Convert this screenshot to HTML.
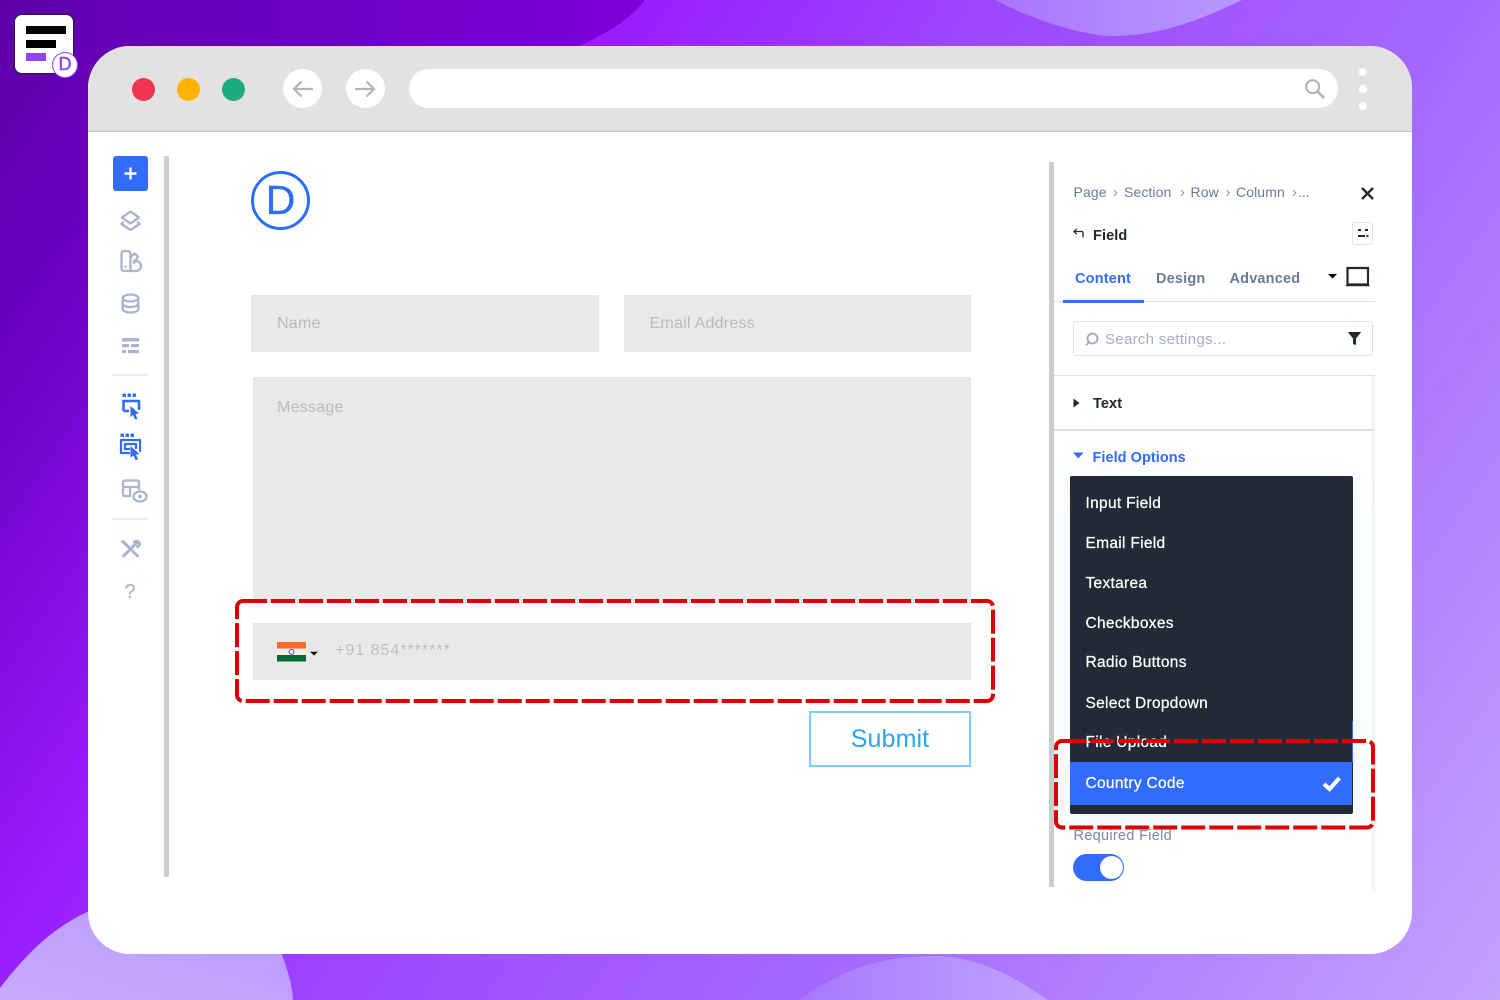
<!DOCTYPE html>
<html><head><meta charset="utf-8">
<style>
*{box-sizing:border-box;margin:0;padding:0}
html,body{width:1500px;height:1000px;overflow:hidden}
body{font-family:"Liberation Sans",sans-serif;position:relative;background:#fff}
.a{position:absolute;white-space:nowrap}
.f{background:#e9e9e9;position:absolute;color:#bbb;font-size:16px;letter-spacing:.25px}
.m{position:absolute;left:1085.5px;color:#fff;font-size:15.5px;-webkit-text-stroke:.25px #fff;white-space:nowrap;letter-spacing:.3px}
.bc{color:#6b7a99;font-size:14px;top:184px;letter-spacing:.1px}
.sep{color:#8a95ad;font-size:15px;top:183.5px}
.tab{top:270.5px;font-size:14.5px;font-weight:700;color:#6b7a99;letter-spacing:.18px}
</style></head><body>
<svg class="a" style="left:0;top:0" width="1500" height="1000">
<defs>
<linearGradient id="g2" x1="0" y1="0" x2="1500" y2="1000" gradientUnits="userSpaceOnUse">
<stop offset="0" stop-color="#5c00a6"/><stop offset=".12" stop-color="#6e00c4"/><stop offset=".29" stop-color="#9a1cff"/><stop offset=".45" stop-color="#9d45ff"/><stop offset=".7" stop-color="#a66bff"/><stop offset="1" stop-color="#c3a2fd"/></linearGradient>
<linearGradient id="b0" x1="0" y1="0" x2="1" y2="0"><stop offset="0" stop-color="#6400b5"/><stop offset="1" stop-color="#7c00d8"/></linearGradient>
<linearGradient id="b1" x1="0" y1="1" x2="1" y2="0"><stop offset="0" stop-color="#c6abff"/><stop offset="1" stop-color="#b99bfd"/></linearGradient>
<linearGradient id="b2" x1="0" y1="0" x2="1" y2="0"><stop offset="0" stop-color="#a678ff"/><stop offset="1" stop-color="#bfa3fd"/></linearGradient>
<linearGradient id="b3" x1="0" y1="0" x2="1" y2="0"><stop offset="0" stop-color="#a976ff"/><stop offset="1" stop-color="#b898ff"/></linearGradient>
</defs>
<rect width="1500" height="1000" fill="url(#g2)"/>
<path d="M80 0H645C625 25 600 36 575 48H80Z" fill="url(#b0)"/>
<path d="M995 0C1050 28 1095 36 1112 36C1160 36 1200 20 1242 0Z" fill="url(#b3)"/>
<path d="M0 988C25 955 55 925 92 910L280 950C288 970 292 985 293 1000H0Z" fill="url(#b1)"/>
<path d="M800 1000C845 965 890 956 935 956C985 956 1025 985 1048 1000Z" fill="url(#b2)"/>
</svg>

<!-- window -->
<div class="a" style="left:88px;top:46px;width:1324px;height:908px;background:#fff;border-radius:42px;overflow:hidden">
<div style="position:absolute;left:0;top:0;width:100%;height:86px;background:#e2e2e2;border-bottom:1px solid #c9b4e8"></div>
</div>
<div class="a" style="left:132px;top:77.5px;width:23px;height:23px;border-radius:50%;background:#ef364e"></div>
<div class="a" style="left:177px;top:77.5px;width:23px;height:23px;border-radius:50%;background:#ffb300"></div>
<div class="a" style="left:222px;top:77.5px;width:23px;height:23px;border-radius:50%;background:#1dab7f"></div>
<div class="a" style="left:283px;top:69px;width:39px;height:39px;border-radius:50%;background:#fff"></div>
<div class="a" style="left:345.5px;top:69px;width:39px;height:39px;border-radius:50%;background:#fff"></div>
<svg class="a" style="left:283px;top:69px" width="102" height="40" fill="none" stroke="#b3b3b3" stroke-width="2.2"><path d="M30 20H11M18.500 12.500L11 20L18.500 27.500"/><path d="M72 20H91M83.500 12.500L91 20L83.500 27.500"/></svg>
<div class="a" style="left:408.500px;top:69px;width:929.500px;height:39px;border-radius:20px;background:#fff"></div>
<svg class="a" style="left:1303px;top:76px" width="26" height="26" fill="none" stroke="#b0b0b0" stroke-width="2"><circle cx="9.700" cy="10.700" r="6.500"/><path d="M14.500 15.500L21 22" stroke-width="2.500"/></svg>
<div class="a" style="left:1358.500px;top:68px;width:8px;height:8px;border-radius:50%;background:#fff"></div>
<div class="a" style="left:1358.500px;top:85px;width:8px;height:8px;border-radius:50%;background:#fff"></div>
<div class="a" style="left:1358.500px;top:101.500px;width:8px;height:8px;border-radius:50%;background:#fff"></div>

<!-- logo -->
<div class="a" style="left:14px;top:14px;width:60px;height:60px;background:#fff;border:1px solid #222;border-radius:8px"></div>
<div class="a" style="left:26px;top:26px;width:40px;height:7.500px;background:#000"></div>
<div class="a" style="left:26px;top:40px;width:29.500px;height:7.500px;background:#000"></div>
<div class="a" style="left:26px;top:53px;width:19.500px;height:8px;background:#9146ef"></div>
<div class="a" style="left:52px;top:52px;width:26px;height:26px;border-radius:50%;background:#fff;border:1.500px solid #9146ef;color:#9146ef;font-size:18px;line-height:23.500px;text-align:center;-webkit-text-stroke:.5px #9146ef">D</div>

<!-- left sidebar -->
<div class="a" style="left:113px;top:156px;width:35px;height:35px;background:#316bff;border-radius:3px"></div>
<svg class="a" style="left:113px;top:156px" width="35" height="35" stroke="#fff" stroke-width="2.400"><path d="M17.500 11.500V23.500M11.500 17.500H23.500"/></svg>
<div class="a" style="left:164px;top:156px;width:5px;height:721px;background:#cdcdcd;border-radius:2px"></div>
<svg class="a" style="left:110px;top:205px" width="45" height="410" fill="none" stroke="#aab4cf" stroke-width="2.300" stroke-linejoin="round" stroke-linecap="round">
<path d="M20.500 6.500L29 12.500L20.500 18.500L12 12.500Z"/><path d="M13 17.500L11.500 19L20.500 25L29.500 19L28 17.500"/>
<path d="M20.500 66H14.500C12.500 66 11.500 65 11.500 63V49C11.500 47 12.500 46 14.500 46H17.500C19.500 46 20.500 47 20.500 49Z"/>
<path d="M20.500 52L24.500 48.500L28 51.500L24 58"/><path d="M24 56C28 55.500 31 57.500 31 61C31 64 28.500 66 26 66H20.500"/>
<circle cx="15.500" cy="61.500" r="1.200" fill="#aab4cf" stroke="none"/>
<ellipse cx="20.500" cy="93" rx="7.800" ry="3.500"/><path d="M12.700 93V104C12.700 106 16 107.500 20.500 107.500S28.300 106 28.300 104V93M12.700 98.500C12.700 100.500 16 102 20.500 102S28.300 100.500 28.300 98.500"/>
<g stroke="none" fill="#aab4cf"><rect x="12" y="133" width="17" height="3.500"/><rect x="12" y="139" width="7" height="3.200"/><rect x="21" y="139" width="8" height="3.200"/><rect x="12" y="145" width="4" height="3.200"/><rect x="18" y="145" width="11" height="3.200"/></g>
<path d="M3 170H37M3 314H37" stroke="#d5dbe6" stroke-width="1.200"/>
<g stroke="#316bff" stroke-linecap="butt" stroke-linejoin="miter"><path d="M13.500 206V196H29V205M13.500 206H19" stroke-width="2.600"/></g>
<g fill="#316bff" stroke="none"><rect x="12.500" y="188.500" width="3.500" height="3.500" rx=".8"/><rect x="17.500" y="188.500" width="3.500" height="3.500" rx=".8"/><rect x="22.500" y="188.500" width="3.500" height="3.500" rx=".8"/><path d="M20.500 201L29 208.500L25.500 209L27.500 214L25 214.500L23 210L20.500 212Z"/>
<rect x="10.500" y="228.500" width="3.500" height="3.500" rx=".8"/><rect x="15.500" y="228.500" width="3.500" height="3.500" rx=".8"/><rect x="20.500" y="228.500" width="3.500" height="3.500" rx=".8"/><path d="M20.500 241L29.500 249L26 249.500L28 254.500L25.500 255L23.500 250.500L20.500 252.500Z"/></g>
<g stroke="#316bff" stroke-width="2.200"><path d="M19 248H11V235H30V246"/><path d="M19 244H15V239H26V243"/></g>
<path d="M20 291H15C13.500 291 13 290 13 289V277.500C13 276 13.500 275.500 15 275.500H27C28.500 275.500 29 276 29 277.500V284M13 282H29M20 282V291"/>
<ellipse cx="30" cy="291.500" rx="6.500" ry="5" fill="#fff"/><circle cx="30" cy="291.500" r="1.900" fill="#aab4cf" stroke="none"/>
<path d="M13.500 337L27.500 351M27.500 337L13.500 351" stroke-width="3"/>
<path d="M12.500 336.500L16 340M24.500 337C27 335 30 337 29.500 340L27.500 342" stroke-width="2.800"/>
</svg>
<div class="a" style="left:124.500px;top:580.500px;color:#b3bcd3;font-size:20px;-webkit-text-stroke:.5px #b3bcd3">?</div>

<!-- logo D -->
<div class="a" style="left:251px;top:171px;width:59px;height:59px;border:3.500px solid #2d6ff0;border-radius:50%;color:#2d6ff0;font-size:41px;line-height:52px;text-align:center;-webkit-text-stroke:.3px #2d6ff0">D</div>

<!-- form -->
<div class="f" style="left:251px;top:295px;width:347.500px;height:57px;padding:20px 26px">Name</div>
<div class="f" style="left:624px;top:295px;width:347px;height:57px;padding:20px 25.500px">Email Address</div>
<div class="f" style="left:253px;top:377px;width:718px;height:226px;padding:22px 24px">Message</div>
<div class="f" style="left:253px;top:623px;width:718px;height:56.500px"></div>
<svg class="a" style="left:277px;top:641.500px" width="42" height="20"><rect width="29" height="6.500" fill="#ff6a2b"/><rect y="6.500" width="29" height="6.500" fill="#f5efe8"/><rect y="13" width="29" height="6.500" fill="#086b35"/><circle cx="14.500" cy="9.800" r="2.400" fill="none" stroke="#5a5ab0" stroke-width="1"/><path d="M33 9.800H41L37 13.500Z" fill="#000"/></svg>
<div class="a" style="left:335px;top:642px;color:#c0c0c0;font-size:16px;letter-spacing:1px">+91 854*******</div>
<div class="a" style="left:809px;top:711px;width:162px;height:56px;border:2.500px solid #7fcbff;color:#2ea3f2;font-size:25px;line-height:53px;text-align:center;letter-spacing:.1px">Submit</div>

<!-- right panel -->
<div class="a" style="left:1049px;top:162px;width:5px;height:725px;background:#cdcdcd"></div>
<div class="a" style="left:1372px;top:375px;width:3px;height:515px;background:#f3f3f5"></div>
<div class="a bc" style="left:1073.500px">Page</div><div class="a sep" style="left:1113px">&#8250;</div>
<div class="a bc" style="left:1124px">Section</div><div class="a sep" style="left:1180px">&#8250;</div>
<div class="a bc" style="left:1190.500px">Row</div><div class="a sep" style="left:1225.500px">&#8250;</div>
<div class="a bc" style="left:1236px">Column</div><div class="a sep" style="left:1292px">&#8250;</div><div class="a" style="left:1298px;top:184px;color:#6b7a99;font-size:14px">...</div>
<svg class="a" style="left:1360px;top:186px" width="15" height="15" stroke="#23282f" stroke-width="2.400"><path d="M2 2L13 13M13 2L2 13"/></svg>
<svg class="a" style="left:1073px;top:228px" width="12" height="12" fill="none" stroke="#23282f" stroke-width="1.300"><path d="M2 3.500H8.500C9.500 3.500 10 4 10 5V9.500"/><path d="M3.800 .800L1 3.500L3.800 6.200" /></svg>
<div class="a" style="left:1093px;top:227.500px;color:#23282f;font-size:14.500px;font-weight:700;letter-spacing:.1px">Field</div>
<div class="a" style="left:1352px;top:222px;width:21px;height:23px;border:1px solid #dfe3ee;border-radius:3px"></div>
<svg class="a" style="left:1352px;top:222px" width="21" height="23" fill="#23282f"><rect x="6" y="7" width="3" height="2"/><rect x="13" y="7" width="3" height="2"/><rect x="6" y="13" width="7" height="2"/><rect x="14.500" y="13" width="2" height="2"/></svg>
<div class="a tab" style="left:1075px;color:#316bff">Content</div>
<div class="a tab" style="left:1156px">Design</div>
<div class="a tab" style="left:1229.500px">Advanced</div>
<svg class="a" style="left:1327px;top:266px" width="44" height="24"><path d="M1 8H10L5.500 12.500Z" fill="#000"/><path d="M20.500 2H41V18.500H20.500Z" fill="none" stroke="#23282f" stroke-width="2.200"/><path d="M19 19.500H42.500" stroke="#23282f" stroke-width="1.500"/></svg>
<div class="a" style="left:1054px;top:301px;width:321px;height:1px;background:#dde0ec"></div>
<div class="a" style="left:1063px;top:300px;width:81px;height:3px;background:#316bff"></div>
<div class="a" style="left:1073px;top:321px;width:300px;height:35px;border:1px solid #e0e3ee;border-radius:3px"></div>
<svg class="a" style="left:1084px;top:331px" width="16" height="16" fill="none" stroke="#9da6bd" stroke-width="1.800"><circle cx="8.500" cy="7.500" r="5"/><path d="M5 11L2 14.500"/></svg>
<div class="a" style="left:1105px;top:331px;color:#a5adc3;font-size:15px;letter-spacing:.3px">Search settings...</div>
<svg class="a" style="left:1347px;top:331px" width="15" height="15" fill="#23282f"><path d="M.8 1H14.200L9 7.500V14L6 13V7.500Z"/></svg>
<div class="a" style="left:1054px;top:375px;width:321px;height:1px;background:#dcdfeb"></div>
<div class="a" style="left:1054px;top:429px;width:319px;height:2px;background:#d9dce9"></div>
<svg class="a" style="left:1073px;top:396.500px" width="8" height="12" fill="#23282f"><path d="M.500 1.500L6.500 6L.500 10.500Z"/></svg>
<div class="a" style="left:1093px;top:395.500px;color:#23282f;font-size:14.500px;font-weight:700;letter-spacing:.1px">Text</div>
<svg class="a" style="left:1073px;top:452px" width="12" height="9" fill="#316bff"><path d="M0 .500H10.500L5.250 6.500Z"/></svg>
<div class="a" style="left:1092.500px;top:450px;color:#316bff;font-size:14.500px;font-weight:700;letter-spacing:.05px">Field Options</div>

<!-- dropdown -->
<div class="a" style="left:1070px;top:476px;width:283px;height:338px;background:#212b37;border-radius:2px;box-shadow:0 5px 30px rgba(43,135,218,.1)"></div>
<div class="m" style="top:495px">Input Field</div>
<div class="m" style="top:535px">Email Field</div>
<div class="m" style="top:575px">Textarea</div>
<div class="m" style="top:615px">Checkboxes</div>
<div class="m" style="top:654px">Radio Buttons</div>
<div class="m" style="top:695px">Select Dropdown</div>
<div class="m" style="top:734px">File Upload</div>
<div class="a" style="left:1352px;top:721px;width:1px;height:41px;background:#316bff"></div>
<div class="a" style="left:1070px;top:762px;width:282px;height:43px;background:#316bff"></div>
<div class="m" style="top:775px">Country Code</div>
<svg class="a" style="left:1322px;top:775px" width="20" height="17" fill="none" stroke="#fff" stroke-width="4"><path d="M2 9L7.500 14L17.500 3"/></svg>
<div class="a" style="left:1073.500px;top:828px;color:#7b88a6;font-size:14.500px;letter-spacing:.3px">Required Field</div>
<div class="a" style="left:1073px;top:854px;width:51px;height:27px;border-radius:14px;background:#316bff"></div>
<div class="a" style="left:1100px;top:856px;width:23px;height:23px;border-radius:50%;background:#fff"></div>

<!-- red dashes -->
<svg class="a" style="left:0;top:0" width="1500" height="1000" fill="none" stroke="#dc0000" stroke-width="4">
<rect x="237" y="601" width="756" height="100" rx="6" stroke-dasharray="24 4"/>
<rect x="1056" y="741" width="317" height="86.500" rx="6" stroke-dasharray="24 4"/>
</svg>
</body></html>
